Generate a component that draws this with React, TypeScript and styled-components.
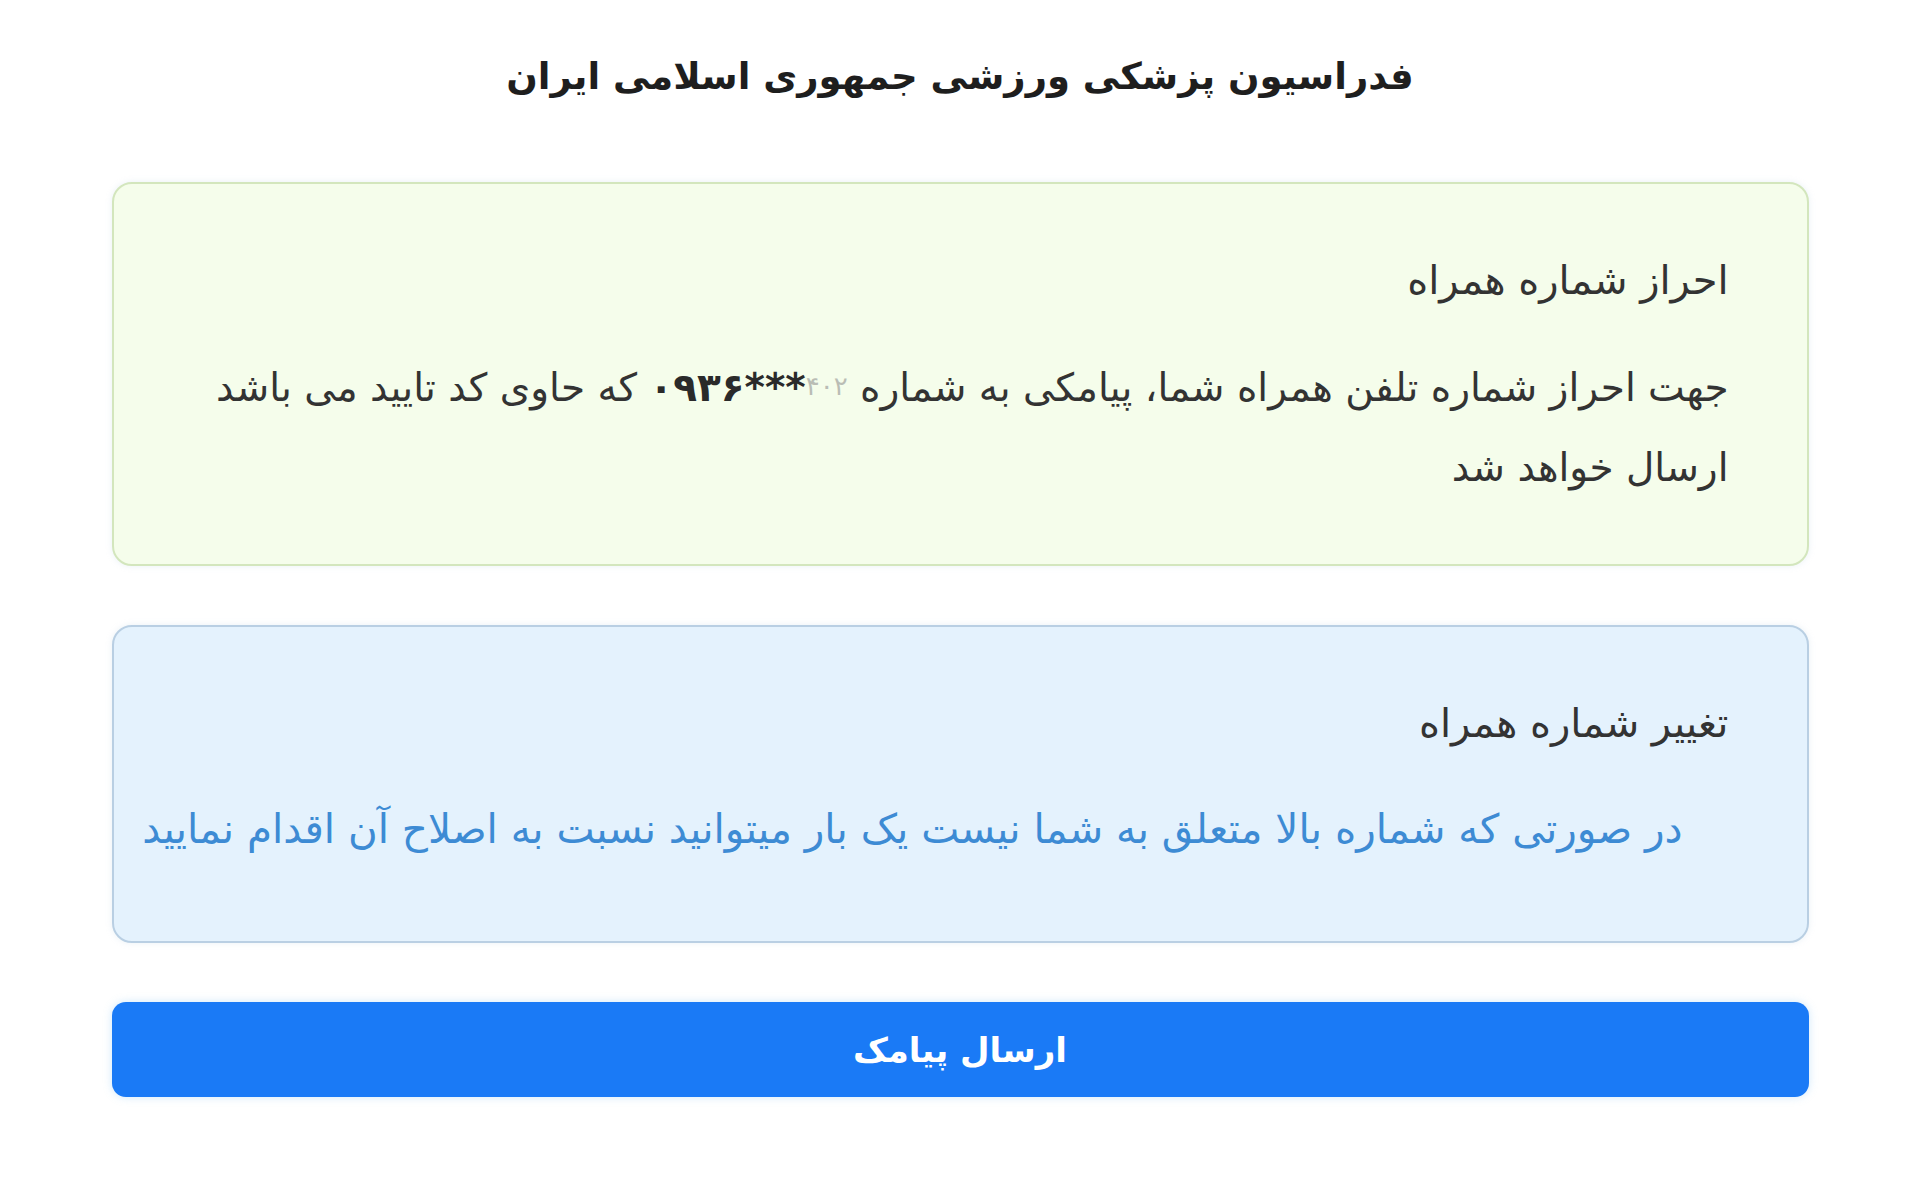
import React from 'react'
import styled, { createGlobalStyle } from 'styled-components'

const GlobalStyle = createGlobalStyle`
    html, body {
        margin: 0;
        padding: 0;
        background: #ffffff;
    }
    body {
        font-family: "DejaVu Sans", "Noto Sans", sans-serif;
        color: #333333;
    }
`

type Tone = 'green' | 'blue'

const tones = {
    green: { bg: '#f5fdeb', border: '#d3e6bd', bottom: 56 },
    blue: { bg: '#e4f2fd', border: '#b9cfe3', bottom: 72 },
}

export default function App() {
    return (
        <>
            <GlobalStyle />
            <Page dir="rtl">
                <Title>فدراسیون پزشکی ورزشی جمهوری اسلامی ایران</Title>
                <Card tone="green">
                    <CardTitle>احراز شماره همراه</CardTitle>
                    <CardText>
                        جهت احراز شماره تلفن همراه شما، پیامکی به شماره{' '}
                        <Phone dir="ltr">
                            ۰۹۳۶***<Masked>۴۰۲</Masked>
                        </Phone>{' '}
                        که حاوی کد تایید می باشد ارسال خواهد شد
                    </CardText>
                </Card>
                <Card tone="blue">
                    <CardTitle>تغییر شماره همراه</CardTitle>
                    <ChangeLink href="#">
                        در صورتی که شماره بالا متعلق به شما نیست یک بار میتوانید نسبت به اصلاح آن اقدام نمایید
                    </ChangeLink>
                </Card>
                <SendButton type="button">ارسال پیامک</SendButton>
            </Page>
        </>
    )
}

const Page = styled.div`
    width: 1697px;
    margin: 0 auto;
    padding: 48px 0 80px;
    display: flex;
    flex-direction: column;
    gap: 59px;
    box-sizing: border-box;
`

const Title = styled.h1`
    margin: 0 0 18px;
    text-align: center;
    font-size: 37px;
    line-height: 57px;
    font-weight: 700;
    color: #1e1e1e;
`

const Card = styled.section<{ tone: Tone }>`
    background: ${(p) => tones[p.tone].bg};
    border: 2px solid ${(p) => tones[p.tone].border};
    border-radius: 20px;
    padding: 66px 78px ${(p) => tones[p.tone].bottom}px 24px;
    box-shadow: 0 0 6px rgba(170, 200, 220, 0.25);
    display: flex;
    flex-direction: column;
    gap: 36px;
`

const CardTitle = styled.h2`
    margin: 0;
    font-size: 40px;
    line-height: 60px;
    font-weight: 400;
    color: #333333;
`

const CardText = styled.p`
    margin: 0;
    font-size: 39px;
    line-height: 80px;
    color: #333333;
`

const Phone = styled.span`
    display: inline-block;
    font-weight: 700;
    color: #2a2a2a;
`

const Masked = styled.span`
    font-size: 26px;
    font-weight: 400;
    color: #8a8a8a;
    opacity: 0.55;
    vertical-align: 6px;
`

const ChangeLink = styled.a`
    display: block;
    margin: 0 46px 0 0;
    font-size: 40.5px;
    line-height: 80px;
    color: #3d8bd4;
    text-decoration: none;
    white-space: nowrap;
`

const SendButton = styled.button`
    height: 95px;
    border: none;
    border-radius: 14px;
    background: #1a7af6;
    color: #ffffff;
    font-family: inherit;
    font-size: 34px;
    font-weight: 700;
    cursor: pointer;
    box-shadow: 0 0 8px rgba(120, 190, 240, 0.35);
`
